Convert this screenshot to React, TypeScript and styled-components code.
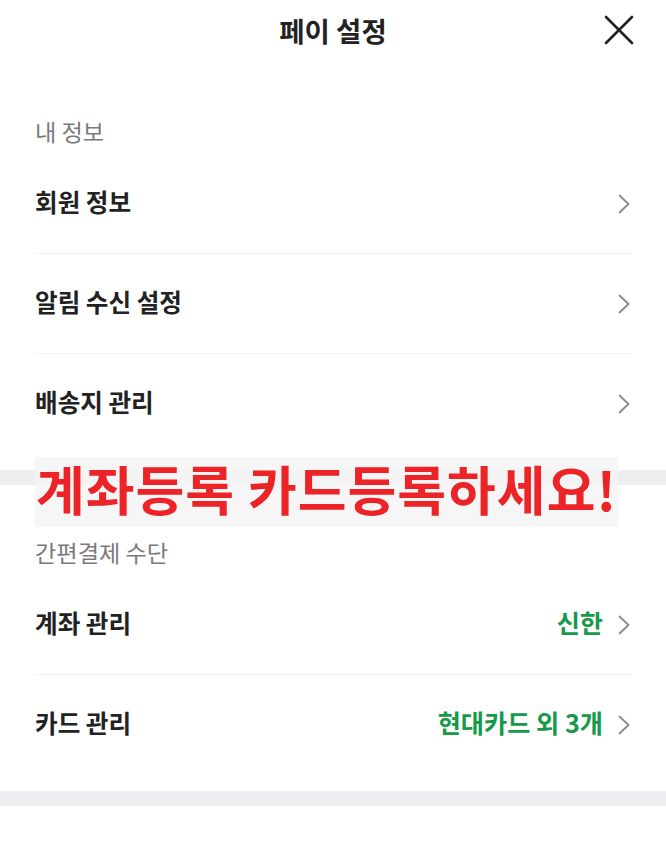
import React from "react";
import styled, { createGlobalStyle } from "styled-components";

const Global = createGlobalStyle`
  html, body { margin: 0; padding: 0; background: #fff; }
  body { font-family: "Noto Sans CJK KR", "Noto Sans", sans-serif; }
  * { box-sizing: border-box; }
`;

const Page = styled.div`
  position: relative;
  width: 666px;
  min-height: 849px;
  background: #fff;
  overflow: hidden;
`;

const Header = styled.header`
  position: relative;
  height: 64px;
  display: flex;
  align-items: center;
  justify-content: center;
  padding-bottom: 4px;
`;

const Title = styled.h1`
  margin: 0;
  font-size: 27.5px;
  font-weight: 700;
  color: #222;
  letter-spacing: 0;
`;

const CloseButton = styled.button`
  position: absolute;
  right: 32px;
  top: 15px;
  width: 30px;
  height: 30px;
  padding: 0;
  border: 0;
  background: none;
  display: flex;
  align-items: center;
  justify-content: center;
`;

const Section = styled.section`
  padding: 52px 34px 16px 35px;
`;

const SectionLabel = styled.div`
  height: 30px;
  line-height: 30px;
  font-size: 23.2px;
  color: #7a7a7a;
  margin-bottom: 8px;
`;

const Row = styled.div<{ $last?: boolean }>`
  height: 100px;
  display: flex;
  align-items: center;
  justify-content: space-between;
  padding-bottom: 6px;
  border-bottom: ${(p) => (p.$last ? "none" : "1px solid #f1f1f1")};
`;

const RowTitle = styled.span`
  font-size: 24.6px;
  font-weight: 700;
  color: #222;
`;

const RowRight = styled.div`
  display: flex;
  align-items: center;
  gap: 15px;
  padding-right: 2px;
`;

const RowValue = styled.span`
  font-size: 25.2px;
  font-weight: 700;
  color: #17994a;
`;

const Chevron = styled.svg`
  margin-top: 6px;
`;

const Band = styled.div`
  height: 15px;
  background: #eeeef0;
`;

const Overlay = styled.div`
  position: absolute;
  left: 35px;
  top: 457px;
  width: 583px;
  height: 70px;
  background: rgba(244, 244, 244, 0.8);
  display: flex;
  align-items: center;
  padding-left: 1px;
  font-size: 53px;
  font-weight: 700;
  color: #ec2327;
  white-space: nowrap;
  letter-spacing: 1px;
  line-height: 1;
`;

const OverlayText = styled.span`
  margin-top: -8px;
`;

const ChevronIcon = () => (
  <Chevron width="12" height="20" viewBox="0 0 12 20">
    <polyline points="1.5,1.5 10.5,10 1.5,18.5" fill="none" stroke="#8a8a8a" strokeWidth="1.8" strokeLinecap="round" strokeLinejoin="round" />
  </Chevron>
);

const CloseIcon = () => (
  <svg width="30" height="30" viewBox="0 0 30 30">
    <path d="M2 2 L28 28 M28 2 L2 28" stroke="#222" strokeWidth="2.6" strokeLinecap="round" />
  </svg>
);

const items1 = ["회원 정보", "알림 수신 설정", "배송지 관리"];
const items2: { title: string; value: string }[] = [
  { title: "계좌 관리", value: "신한" },
  { title: "카드 관리", value: "현대카드 외 3개" },
];

export default function App() {
  return (
    <Page>
      <Global />
      <Header>
        <Title>페이 설정</Title>
        <CloseButton aria-label="닫기">
          <CloseIcon />
        </CloseButton>
      </Header>
      <Section>
        <SectionLabel>내 정보</SectionLabel>
        {items1.map((t, i) => (
          <Row key={t} $last={i === items1.length - 1}>
            <RowTitle>{t}</RowTitle>
            <RowRight>
              <ChevronIcon />
            </RowRight>
          </Row>
        ))}
      </Section>
      <Band />
      <Section>
        <SectionLabel>간편결제 수단</SectionLabel>
        {items2.map((it, i) => (
          <Row key={it.title} $last={i === items2.length - 1}>
            <RowTitle>{it.title}</RowTitle>
            <RowRight>
              <RowValue>{it.value}</RowValue>
              <ChevronIcon />
            </RowRight>
          </Row>
        ))}
      </Section>
      <Band />
      <Overlay>
        <OverlayText>계좌등록 카드등록하세요!</OverlayText>
      </Overlay>
    </Page>
  );
}
